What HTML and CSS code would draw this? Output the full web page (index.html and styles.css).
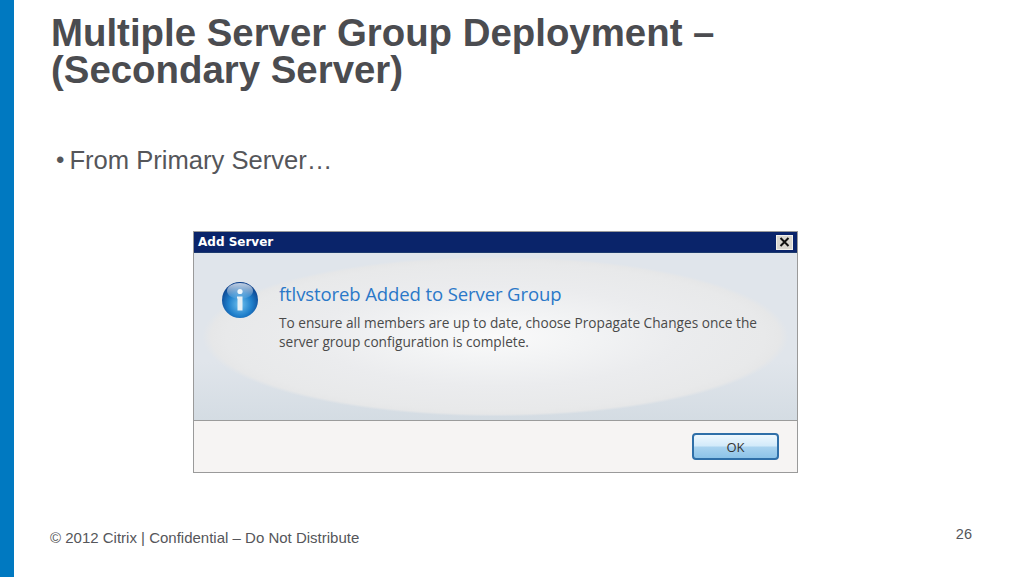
FILE: index.html
```html
<!DOCTYPE html>
<html lang="en">
<head>
<meta charset="utf-8">
<title>Multiple Server Group Deployment</title>
<link rel="stylesheet" href="styles.css">
</head>
<body>
<div class="slide">
  <div class="rail"></div>
  <div class="main">
    <h1 class="title">Multiple Server Group Deployment –<br>(Secondary Server)</h1>
    <ul class="bullets"><li class="bullet"><span class="dot">•</span><span>From Primary Server…</span></li></ul>
    <div class="dialog">
      <div class="titlebar">
        <span class="titlebar-text">Add Server</span>
        <span class="close"><svg width="11" height="10" viewBox="0 0 11 10"><path d="M1.5 1 L9.5 9 M9.5 1 L1.5 9" stroke="#111" stroke-width="2" fill="none"/></svg></span>
      </div>
      <div class="dialog-body">
        <svg class="info" width="36" height="38" viewBox="0 0 36 38">
          <defs>
            <radialGradient id="orb" cx="50%" cy="62%" r="60%">
              <stop offset="0" stop-color="#6fc0ee"/>
              <stop offset="0.55" stop-color="#1f7fcb"/>
              <stop offset="1" stop-color="#0b3f8a"/>
            </radialGradient>
            <linearGradient id="shine" x1="0" y1="0" x2="0" y2="1">
              <stop offset="0" stop-color="#fff" stop-opacity=".75"/>
              <stop offset="1" stop-color="#fff" stop-opacity=".05"/>
            </linearGradient>
          </defs>
          <circle cx="18" cy="19" r="18" fill="url(#orb)"/>
          <ellipse cx="18" cy="10" rx="13" ry="8" fill="url(#shine)"/>
          <circle cx="18" cy="10.5" r="2.6" fill="#f2f8fc"/>
          <path d="M15 15.5 H20.5 V29.5 H15.5 V17.5 H15 Z" fill="#e6eff5"/>
        </svg>
        <div class="message">
          <div class="heading">ftlvstoreb Added to Server Group</div>
          <p class="detail">To ensure all members are up to date, choose Propagate Changes once the server group configuration is complete.</p>
        </div>
      </div>
      <div class="dialog-footer"><span class="ok">OK</span></div>
    </div>
    <div class="footer">
      <span class="copyright">© 2012 Citrix | Confidential – Do Not Distribute</span>
      <span class="page">26</span>
    </div>
  </div>
</div>
</body>
</html>
```

FILE: styles.css
```css
html, body { margin: 0; padding: 0; background: #fff; }
.slide { display: flex; width: 1023px; height: 577px; overflow: hidden; font-family: "Liberation Sans", Arial, sans-serif; color: #4b4c50; }
.rail { width: 14px; flex: none; background: #0079c1; }
.main { flex: 1; display: flex; flex-direction: column; padding: 14px 51px 0 37px; min-width: 0; }
.title { margin: 0; font-size: 38.4px; line-height: 37px; font-weight: 700; color: #4b4c50; }
.bullets { list-style: none; margin: 57px 0 0; padding: 0 0 0 5px; }
.bullet { display: flex; gap: 5px; font-size: 25.6px; line-height: 30px; color: #55565a; }
.dot { font-size: 24px; }
.dialog { width: 603px; height: 240px; margin: 56px 0 0 142px; border: 1px solid #9a9a9a; display: flex; flex-direction: column; flex: none; }
.titlebar { height: 20px; flex: none; background: #0a246a; display: flex; align-items: center; justify-content: space-between; padding: 0 4px 0 4px; border-bottom: 1px solid #1c3a6e; }
.titlebar-text { font-family: "DejaVu Sans", sans-serif; font-weight: 700; font-size: 12px; color: #fff; }
.close { width: 17px; height: 15px; background: #d9d6cf; border: 1px solid #f2f0ea; box-sizing: border-box; display: flex; align-items: center; justify-content: center; }
.dialog-body { flex: 1; display: flex; gap: 21px; padding: 28px 0 0 28px; box-sizing: border-box; border-bottom: 1px solid #9b9b9b;
  background: radial-gradient(ellipse 293px 80px at 50% 50%, #fafafa 0%, #f3f4f5 28%, #ebecee 62%, #e8e9ea 92%, #e6e7e8 97%, rgba(225,230,236,0) 100%), linear-gradient(180deg, #e0e5eb 0%, #e0e5eb 65%, #d4dce3 100%); }
.info { flex: none; }
.message { width: 490px; }
.heading { font-family: "Open Sans", sans-serif; font-size: 18.5px; line-height: 26px; color: #2a78c8; letter-spacing: -.1px; }
.detail { margin: 6px 0 0; font-family: "Open Sans", sans-serif; font-size: 13.67px; line-height: 19px; color: #4a4a4a; }
.dialog-footer { height: 51px; flex: none; background: #f6f4f3; display: flex; align-items: center; justify-content: flex-end; padding-right: 18px; box-sizing: border-box; }
.ok { width: 87px; height: 27px; box-sizing: border-box; border: 2px solid #2f6fa8; border-radius: 4px; background: linear-gradient(180deg, #eef8fe 0%, #d2eafa 48%, #a9d3ef 52%, #8cc3e8 100%); font-family: "Open Sans", sans-serif; font-size: 13px; line-height: 25px; color: #333; text-align: center; }
.footer { display: flex; justify-content: space-between; align-items: flex-start; margin-top: 46px; font-size: 15px; line-height: 18px; color: #55565a; }
.copyright { padding-top: 10px; margin-left: -1px; }
.page { padding-top: 6px; font-size: 14.5px; }
```
